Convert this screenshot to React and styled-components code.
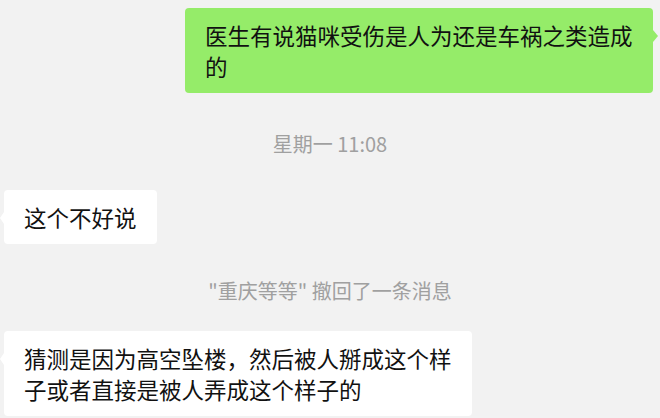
import React from "react";
import styled, { createGlobalStyle } from "styled-components";

const Global = createGlobalStyle`
  html, body { margin: 0; padding: 0; background: #f2f2f2; }
  body {
    font-family: "Noto Sans CJK SC", "Microsoft YaHei", "Noto Sans", sans-serif;
    -webkit-font-smoothing: antialiased;
  }
`;

const Chat = styled.div`
  width: 660px;
  height: 418px;
  overflow: hidden;
  box-sizing: border-box;
  padding-top: 8px;
  display: flex;
  flex-direction: column;
  background: #f2f2f2;
`;

const Row = styled.div`
  display: flex;
  justify-content: ${(p) => (p.$mine ? "flex-end" : "flex-start")};
  padding: ${(p) => (p.$mine ? "0 7px 0 0" : "0 0 0 4px")};
`;

const Bubble = styled.div`
  position: relative;
  box-sizing: border-box;
  max-width: 468px;
  padding: 11.5px 20px;
  border-radius: 4px;
  background: ${(p) => (p.$mine ? "#95ec69" : "#ffffff")};
  color: #111;
  font-size: 22.5px;
  line-height: 31px;
  word-break: break-all;

  &::after {
    content: "";
    position: absolute;
    top: 22px;
    width: 0;
    height: 0;
    border-top: 6px solid transparent;
    border-bottom: 6px solid transparent;
    ${(p) =>
      p.$mine
        ? `right: -5px; border-left: 5px solid #95ec69;`
        : `left: -4px; border-right: 4px solid #ffffff;`}
  }
`;

const SystemLine = styled.div`
  text-align: center;
  color: #a0a0a0;
  font-size: ${(p) => p.$size}px;
  line-height: 24px;
  margin: ${(p) => p.$margin};
  white-space: nowrap;
`;

export default function App() {
  return (
    <>
      <Global />
      <Chat>
        <Row $mine>
          <Bubble $mine>医生有说猫咪受伤是人为还是车祸之类造成的</Bubble>
        </Row>
        <SystemLine $size={20} $margin="39px 0 34px">
          星期一 11:08
        </SystemLine>
        <Row>
          <Bubble>这个不好说</Bubble>
        </Row>
        <SystemLine $size={20} $margin="35px 0 28px">
          "重庆等等" 撤回了一条消息
        </SystemLine>
        <Row>
          <Bubble>猜测是因为高空坠楼，然后被人掰成这个样子或者直接是被人弄成这个样子的</Bubble>
        </Row>
      </Chat>
    </>
  );
}
